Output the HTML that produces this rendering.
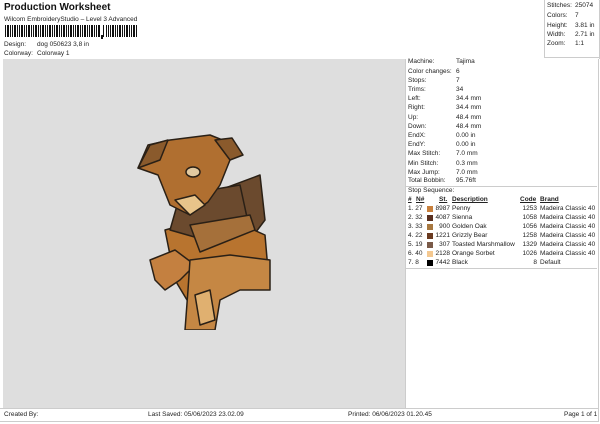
<!DOCTYPE html><html><head><style>
body{margin:0;width:600px;height:424px;background:#fff;font-family:"Liberation Sans",sans-serif;color:#222;position:relative;overflow:hidden}
.a{position:absolute;white-space:nowrap;font-size:6.5px}
.r{position:absolute;font-size:6.5px;white-space:nowrap}
</style></head><body>
<div class="a" style="left:4px;top:2px;font-size:10px;font-weight:bold;color:#111">Production Worksheet</div>
<div class="a" style="left:4px;top:16px">Wilcom EmbroideryStudio – Level 3 Advanced</div>
<div style="position:absolute;left:5px;top:25px;width:133px;height:12px;background:repeating-linear-gradient(90deg,#111 0 1px,#fff 1px 2px,#111 2px 4px,#fff 4px 5px,#111 5px 6px,#fff 6px 7px)"></div>
<div style="position:absolute;left:100px;top:25px;width:2px;height:12px;background:#fff"></div>
<div style="position:absolute;left:101px;top:35px;width:2px;height:4px;background:#111"></div>
<div style="position:absolute;left:105px;top:25px;width:1px;height:12px;background:#fff"></div>
<div class="a" style="left:4px;top:41px">Design:</div><div class="a" style="left:37px;top:41px">dog 050623 3,8 in</div>
<div class="a" style="left:4px;top:50px">Colorway:</div><div class="a" style="left:37px;top:50px">Colorway 1</div>
<div style="position:absolute;left:0;top:0;width:599px;height:59px;border-right:1px solid #ccc"></div>
<div style="position:absolute;left:544px;top:0;width:55px;height:57px;border-left:1px solid #ccc;border-bottom:1px solid #ccc"></div>
<div class="a" style="left:547px;top:2px">Stitches:</div><div class="a" style="left:575px;top:2px">25074</div>
<div class="a" style="left:547px;top:12px">Colors:</div><div class="a" style="left:575px;top:12px">7</div>
<div class="a" style="left:547px;top:22px">Height:</div><div class="a" style="left:575px;top:22px">3.81 in</div>
<div class="a" style="left:547px;top:31px">Width:</div><div class="a" style="left:575px;top:31px">2.71 in</div>
<div class="a" style="left:547px;top:40px">Zoom:</div><div class="a" style="left:575px;top:40px">1:1</div>
<div style="position:absolute;left:3px;top:59px;width:402px;height:349px;background:#dedede"></div>
<div style="position:absolute;left:405px;top:59px;width:192px;height:349px;border-left:1px solid #ccc;border-right:1px solid #ccc"></div>
<div style="position:absolute;left:406px;top:186px;width:191px;height:1px;background:#ccc"></div>
<div style="position:absolute;left:406px;top:268px;width:191px;height:1px;background:#ccc"></div>
<svg style="position:absolute;left:120px;top:130px" width="160" height="200" viewBox="0 0 160 200">
<g stroke="#2a2016" stroke-width="1.5" stroke-linejoin="round">
<path d="M100 60 L140 45 L145 90 L130 110 L95 90Z" fill="#6b4a2e"/>
<path d="M45 100 L100 85 L145 105 L148 140 L120 145 L95 160 L70 175 L55 150Z" fill="#b8742f"/>
<path d="M30 130 L55 120 L75 135 L60 150 L45 160 L35 150Z" fill="#c48040"/>
<path d="M70 130 L110 125 L150 130 L150 160 L120 160 L100 170 L95 200 L65 200 L68 160Z" fill="#c58744"/>
<path d="M60 65 L120 55 L128 92 L85 110 L50 100Z" fill="#6b4a2e"/>
<path d="M70 95 L130 85 L135 100 L80 122Z" fill="#a5703a"/>
<path d="M28 15 L50 10 L90 5 L115 15 L110 30 L100 55 L88 72 L70 85 L50 75 L38 45 L18 38Z" fill="#b06f30"/>
<path d="M18 38 L30 15 L48 10 L40 30Z" fill="#8a5a2c"/>
<path d="M95 10 L112 8 L123 25 L110 30Z" fill="#8a5a2c"/>
<path d="M55 70 L75 65 L85 75 L70 85Z" fill="#e8c48a"/>
<ellipse cx="73" cy="42" rx="7" ry="5" fill="#e2c9a0"/>
<path d="M75 165 L90 160 L95 190 L80 195Z" fill="#e0b070"/>
</g></svg>
<div class="r" style="left:408px;top:58px">Machine:</div><div class="r" style="left:456px;top:58px">Tajima</div>
<div class="r" style="left:408px;top:68px">Color changes:</div><div class="r" style="left:456px;top:68px">6</div>
<div class="r" style="left:408px;top:77px">Stops:</div><div class="r" style="left:456px;top:77px">7</div>
<div class="r" style="left:408px;top:86px">Trims:</div><div class="r" style="left:456px;top:86px">34</div>
<div class="r" style="left:408px;top:95px">Left:</div><div class="r" style="left:456px;top:95px">34.4 mm</div>
<div class="r" style="left:408px;top:104px">Right:</div><div class="r" style="left:456px;top:104px">34.4 mm</div>
<div class="r" style="left:408px;top:114px">Up:</div><div class="r" style="left:456px;top:114px">48.4 mm</div>
<div class="r" style="left:408px;top:123px">Down:</div><div class="r" style="left:456px;top:123px">48.4 mm</div>
<div class="r" style="left:408px;top:132px">EndX:</div><div class="r" style="left:456px;top:132px">0.00 in</div>
<div class="r" style="left:408px;top:141px">EndY:</div><div class="r" style="left:456px;top:141px">0.00 in</div>
<div class="r" style="left:408px;top:150px">Max Stitch:</div><div class="r" style="left:456px;top:150px">7.0 mm</div>
<div class="r" style="left:408px;top:160px">Min Stitch:</div><div class="r" style="left:456px;top:160px">0.3 mm</div>
<div class="r" style="left:408px;top:169px">Max Jump:</div><div class="r" style="left:456px;top:169px">7.0 mm</div>
<div class="r" style="left:408px;top:177px">Total Bobbin:</div><div class="r" style="left:456px;top:177px">95.76ft</div>
<div class="r" style="left:408px;top:187px">Stop Sequence:</div>
<div class="r" style="left:408px;top:196px;font-weight:bold;text-decoration:underline">#</div>
<div class="r" style="left:416px;top:196px;font-weight:bold;text-decoration:underline">N#</div>
<div class="r" style="left:439px;top:196px;font-weight:bold;text-decoration:underline">St.</div>
<div class="r" style="left:452px;top:196px;font-weight:bold;text-decoration:underline">Description</div>
<div class="r" style="left:520px;top:196px;font-weight:bold;text-decoration:underline">Code</div>
<div class="r" style="left:540px;top:196px;font-weight:bold;text-decoration:underline">Brand</div>
<div style="position:absolute;left:0;top:205px">
<div class="r" style="left:408px;top:0">1. 27</div><div style="position:absolute;left:427px;top:1px;width:6px;height:6px;background:#c8803c"></div><div class="r" style="left:433px;top:0;width:17px;text-align:right">8987</div><div class="r" style="left:452px;top:0">Penny</div><div class="r" style="left:515px;top:0;width:22px;text-align:right">1253</div><div class="r" style="left:540px;top:0">Madeira Classic 40</div>
<div class="r" style="left:408px;top:9px">2. 32</div><div style="position:absolute;left:427px;top:10px;width:6px;height:6px;background:#5a3020"></div><div class="r" style="left:433px;top:9px;width:17px;text-align:right">4087</div><div class="r" style="left:452px;top:9px">Sienna</div><div class="r" style="left:515px;top:9px;width:22px;text-align:right">1058</div><div class="r" style="left:540px;top:9px">Madeira Classic 40</div>
<div class="r" style="left:408px;top:18px">3. 33</div><div style="position:absolute;left:427px;top:19px;width:6px;height:6px;background:#a87840"></div><div class="r" style="left:433px;top:18px;width:17px;text-align:right">900</div><div class="r" style="left:452px;top:18px">Golden Oak</div><div class="r" style="left:515px;top:18px;width:22px;text-align:right">1056</div><div class="r" style="left:540px;top:18px">Madeira Classic 40</div>
<div class="r" style="left:408px;top:27px">4. 22</div><div style="position:absolute;left:427px;top:28px;width:6px;height:6px;background:#6a3a20"></div><div class="r" style="left:433px;top:27px;width:17px;text-align:right">1221</div><div class="r" style="left:452px;top:27px">Grizzly Bear</div><div class="r" style="left:515px;top:27px;width:22px;text-align:right">1258</div><div class="r" style="left:540px;top:27px">Madeira Classic 40</div>
<div class="r" style="left:408px;top:36px">5. 19</div><div style="position:absolute;left:427px;top:37px;width:6px;height:6px;background:#7a5a48"></div><div class="r" style="left:433px;top:36px;width:17px;text-align:right">307</div><div class="r" style="left:452px;top:36px">Toasted Marshmallow</div><div class="r" style="left:515px;top:36px;width:22px;text-align:right">1329</div><div class="r" style="left:540px;top:36px">Madeira Classic 40</div>
<div class="r" style="left:408px;top:45px">6. 40</div><div style="position:absolute;left:427px;top:46px;width:6px;height:6px;background:#f4c890"></div><div class="r" style="left:433px;top:45px;width:17px;text-align:right">2128</div><div class="r" style="left:452px;top:45px">Orange Sorbet</div><div class="r" style="left:515px;top:45px;width:22px;text-align:right">1026</div><div class="r" style="left:540px;top:45px">Madeira Classic 40</div>
<div class="r" style="left:408px;top:54px">7. 8</div><div style="position:absolute;left:427px;top:55px;width:6px;height:6px;background:#000"></div><div class="r" style="left:433px;top:54px;width:17px;text-align:right">7442</div><div class="r" style="left:452px;top:54px">Black</div><div class="r" style="left:515px;top:54px;width:22px;text-align:right">8</div><div class="r" style="left:540px;top:54px">Default</div>
</div>
<div style="position:absolute;left:0;top:408px;width:598px;height:12px;border:1px solid #ccc;border-left:none"></div>
<div class="r" style="left:4px;top:411px">Created By:</div>
<div class="r" style="left:148px;top:411px">Last Saved: 05/06/2023 23.02.09</div>
<div class="r" style="left:348px;top:411px">Printed: 06/06/2023 01.20.45</div>
<div class="r" style="left:564px;top:411px">Page 1 of 1</div>
</body></html>
